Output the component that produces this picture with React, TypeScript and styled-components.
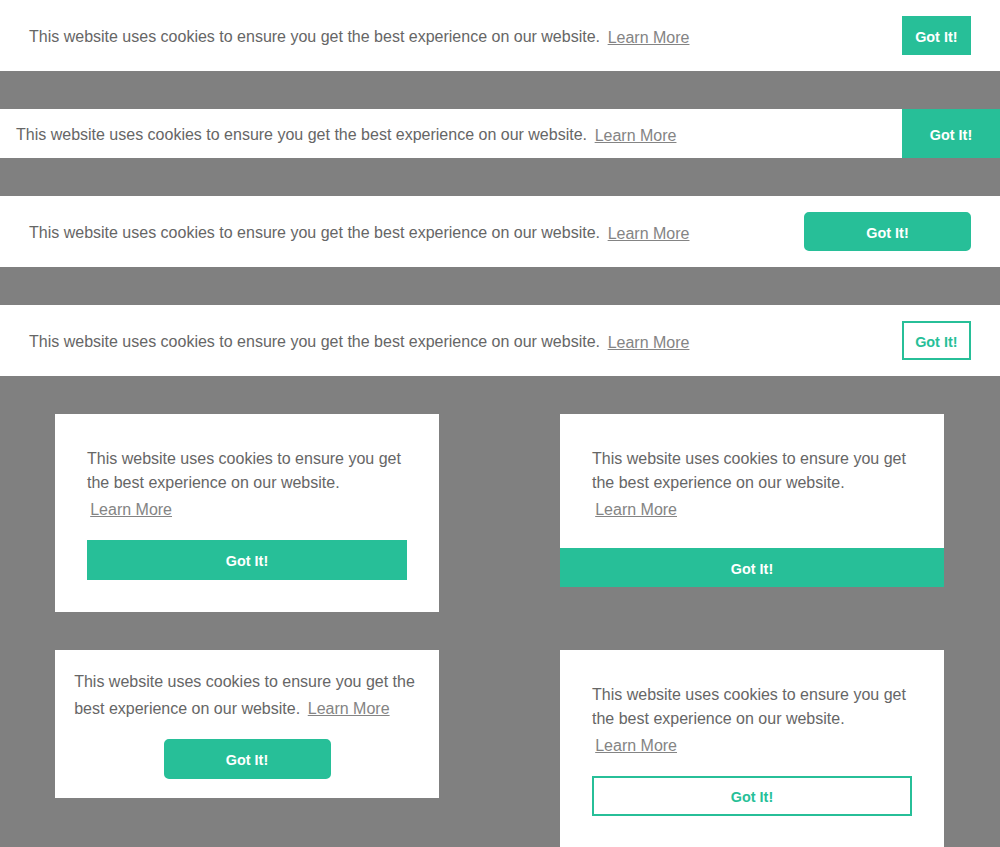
import React from "react";
import styled, { createGlobalStyle, css } from "styled-components";

const TEAL = "#27bf98";
const TEXT = "#666666";

const GlobalStyle = createGlobalStyle`
  html, body {
    margin: 0;
    padding: 0;
    background: #808080;
    font-family: "Liberation Sans", Arial, Helvetica, sans-serif;
  }
  * { box-sizing: border-box; }
`;

const Page = styled.div`
  display: flex;
  flex-direction: column;
  gap: 38px;
`;

const Banner = styled.div<{ $edgeless?: boolean }>`
  display: flex;
  align-items: center;
  justify-content: space-between;
  background: #fff;
  color: ${TEXT};
  font-size: 16px;
  line-height: 24px;
  padding: ${(p) => (p.$edgeless ? "0" : "15.75px 29px")};
`;

const Message = styled.div<{ $inset?: boolean; $floating?: boolean; $edgeless?: boolean; $bar?: boolean }>`
  font-size: 16px;
  line-height: 24px;
  color: ${TEXT};
  padding-top: ${(p) => (p.$bar ? "4px" : "1px")};
  margin-left: ${(p) => (p.$inset ? "16px" : "0")};
  ${(p) =>
    p.$floating &&
    css`
      margin-bottom: 15px;
    `}
  ${(p) =>
    p.$edgeless &&
    css`
      margin: 32px 32px 23px;
    `}
`;

const LearnLink = styled.a`
  display: inline-block;
  padding: 3.2px;
  color: ${TEXT};
  opacity: 0.8;
  text-decoration: underline;
  cursor: pointer;
`;

type BtnProps = {
  $outline?: boolean;
  $rounded?: boolean;
  $block?: boolean;
  $wide?: boolean;
  $edge?: "banner" | "card";
};

const Button = styled.button<BtnProps>`
  display: ${(p) => (p.$block ? "block" : "inline-block")};
  width: ${(p) => (p.$block ? "100%" : "auto")};
  min-width: ${(p) => (p.$wide ? "167px" : "0")};
  font-family: "Liberation Sans", Arial, Helvetica, sans-serif;
  font-size: 14.4px;
  font-weight: 700;
  line-height: 24px;
  padding: 6.76px 11.52px 4.76px;
  border: 2px solid ${TEAL};
  border-radius: ${(p) => (p.$rounded ? "5px" : "0")};
  background: ${(p) => (p.$outline ? "#fff" : TEAL)};
  color: ${(p) => (p.$outline ? TEAL : "#fff")};
  text-align: center;
  white-space: nowrap;
  cursor: pointer;
  ${(p) =>
    p.$edge === "banner" &&
    css`
      border: 0;
      padding: 13.5px 27.8px 11.5px;
    `}
  ${(p) =>
    p.$edge === "card" &&
    css`
      border: 0;
      padding: 8.5px 0 6.5px;
    `}
`;

const CardGrid = styled.div`
  display: grid;
  grid-template-columns: 384px 384px;
  justify-content: space-between;
  align-items: start;
  row-gap: 38px;
  padding: 0 56px 0 55px;
`;

const Card = styled.div<{ $pad: string }>`
  background: #fff;
  width: 384px;
  padding: ${(p) => p.$pad};
  display: flex;
  flex-direction: column;
`;

const Compliance = styled.div`
  text-align: center;
`;

const TEXT_MSG = "This website uses cookies to ensure you get the best experience on our website.";

const Learn = () => <LearnLink>Learn More</LearnLink>;

export default function App() {
  return (
    <>
      <GlobalStyle />
      <Page>
        <Banner>
          <Message $bar>
            {TEXT_MSG} <Learn />
          </Message>
          <Button>Got It!</Button>
        </Banner>

        <Banner $edgeless>
          <Message $bar $inset>
            {TEXT_MSG} <Learn />
          </Message>
          <Button $edge="banner">Got It!</Button>
        </Banner>

        <Banner>
          <Message $bar>
            {TEXT_MSG} <Learn />
          </Message>
          <Button $rounded $wide>
            Got It!
          </Button>
        </Banner>

        <Banner>
          <Message $bar>
            {TEXT_MSG} <Learn />
          </Message>
          <Button $outline>Got It!</Button>
        </Banner>

        <CardGrid>
          <Card $pad="32px">
            <Message $floating>
              {TEXT_MSG} <Learn />
            </Message>
            <Button $block>Got It!</Button>
          </Card>

          <Card $pad="0">
            <Message $edgeless>
              {TEXT_MSG} <Learn />
            </Message>
            <Button $block $edge="card">
              Got It!
            </Button>
          </Card>

          <Card $pad="19.2px">
            <Message $floating>
              {TEXT_MSG} <Learn />
            </Message>
            <Compliance>
              <Button $rounded $wide>
                Got It!
              </Button>
            </Compliance>
          </Card>

          <Card $pad="32px">
            <Message $floating>
              {TEXT_MSG} <Learn />
            </Message>
            <Button $block $outline>
              Got It!
            </Button>
          </Card>
        </CardGrid>
      </Page>
    </>
  );
}
